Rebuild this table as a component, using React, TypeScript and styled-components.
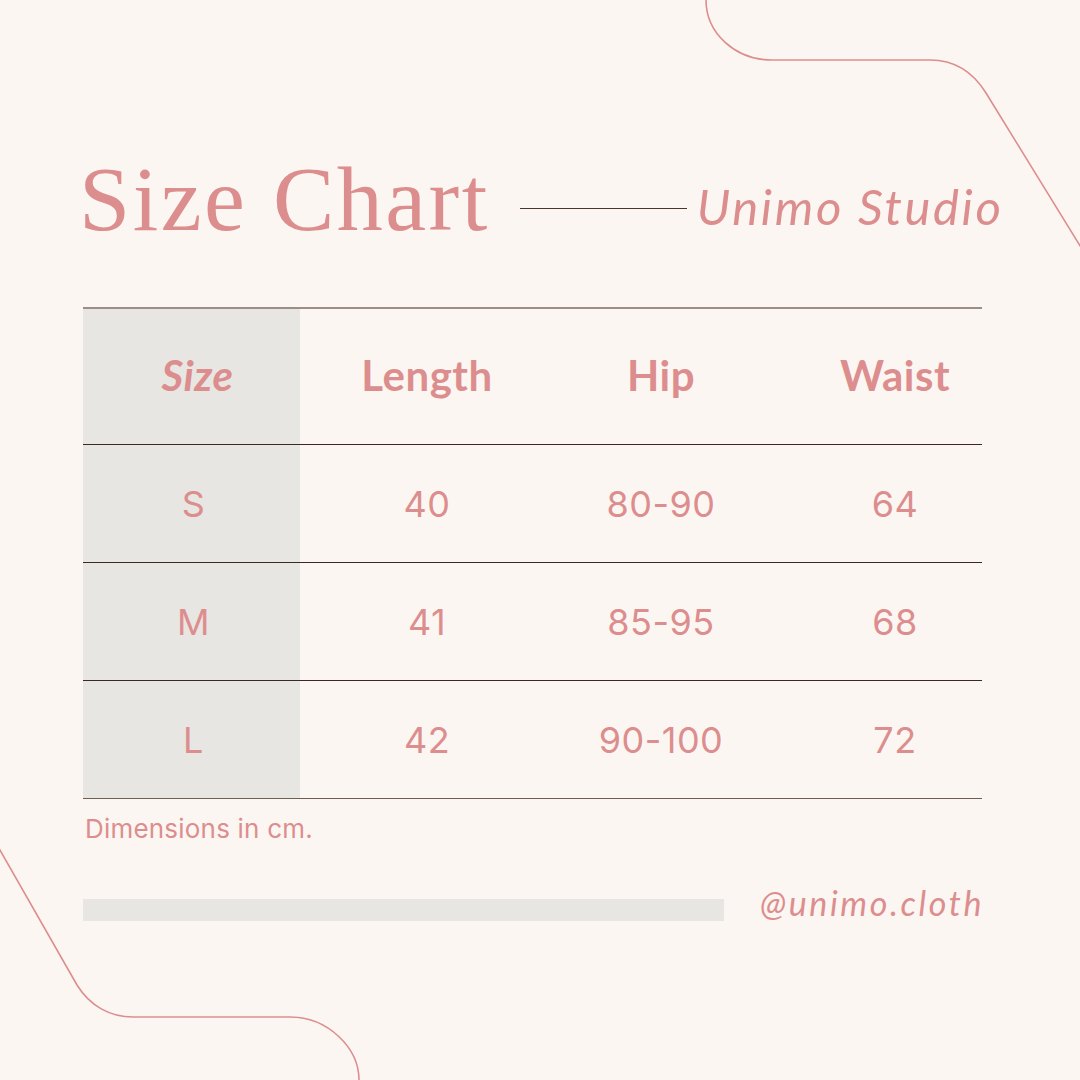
import styled, { createGlobalStyle } from 'styled-components';

const pink = '#dc8e8e';

const GlobalStyle = createGlobalStyle`
  body {
    margin: 0;
    background: #fcf6f2;
  }
`;

const Page = styled.div`
  position: relative;
  width: 1080px;
  height: 1080px;
  overflow: hidden;
  background: #fcf6f2;
  box-sizing: border-box;
  padding: 155px 0 0 83px;
  display: flex;
  flex-direction: column;
`;

const Decor = styled.svg`
  position: absolute;
  left: 0;
  top: 0;
  pointer-events: none;
`;

const Header = styled.header`
  display: flex;
  align-items: flex-start;
  height: 92px;
`;

const Title = styled.h1`
  margin: -2px 0 0 -4px;
  font-family: 'Liberation Serif', 'Times New Roman', serif;
  font-weight: 400;
  font-size: 92px;
  line-height: 1;
  letter-spacing: 2.5px;
  color: ${pink};
`;

const Rule = styled.div`
  width: 167px;
  height: 1px;
  background: #4a352b;
  margin: 53px 10px 0 30px;
`;

const Studio = styled.div`
  margin-top: 27px;
  font-family: Lato, 'Liberation Sans', sans-serif;
  font-style: italic;
  font-size: 49px;
  line-height: 1;
  letter-spacing: 2.6px;
  color: ${pink};
`;

const Table = styled.div`
  margin-top: 60px;
  width: 899px;
  border-top: 2px solid #9c8e86;
`;

const Row = styled.div<{ $head?: boolean; $last?: boolean }>`
  display: grid;
  grid-template-columns: 217px 254px 214px 214px;
  height: ${(p) => (p.$head ? 136 : 118)}px;
  box-sizing: border-box;
  border-bottom: 1px solid ${(p) => (p.$last ? '#6e5d52' : '#3b2820')};
`;

const Cell = styled.div<{ $head?: boolean; $first?: boolean }>`
  display: flex;
  align-items: center;
  justify-content: center;
  background: ${(p) => (p.$first ? '#e8e6e2' : 'transparent')};
  font-family: ${(p) => (p.$head ? "Lato, 'Liberation Sans', sans-serif" : "Inter, 'Liberation Sans', sans-serif")};
  font-weight: ${(p) => (p.$head ? 700 : 400)};
  font-style: ${(p) => (p.$head && p.$first ? 'italic' : 'normal')};
  font-size: ${(p) => (p.$head ? 42 : 36)}px;
  letter-spacing: 0.5px;
  padding-left: ${(p) => (p.$first ? (p.$head ? 12 : 4) : 0)}px;
  padding-bottom: ${(p) => (p.$head ? 4 : 0)}px;
  color: ${pink};

  &:nth-child(4) {
    padding-left: 40px;
  }
`;

const Note = styled.p`
  margin: 17px 0 0 2px;
  font-family: Inter, 'Liberation Sans', sans-serif;
  font-size: 26px;
  line-height: 1;
  letter-spacing: 0.2px;
  color: ${pink};
`;

const Footer = styled.footer`
  margin-top: 44px;
  width: 899px;
  display: flex;
  justify-content: space-between;
  align-items: flex-start;
`;

const Bar = styled.div`
  margin-top: 13px;
  width: 641px;
  height: 22px;
  background: #e8e6e2;
`;

const Handle = styled.div`
  font-family: Lato, 'Liberation Sans', sans-serif;
  font-style: italic;
  font-size: 34px;
  line-height: 1;
  letter-spacing: 2.6px;
  margin-right: -2px;
  color: ${pink};
`;

const headings = ['Size', 'Length', 'Hip', 'Waist'];

const sizes = [
  ['S', '40', '80-90', '64'],
  ['M', '41', '85-95', '68'],
  ['L', '42', '90-100', '72'],
];

export default function App() {
  return (
    <>
      <GlobalStyle />
      <Page>
        <Decor width="1080" height="1080" viewBox="0 0 1080 1080" fill="none">
          <path
            d="M706 -4 L706 0 C706 33 735 60 772 60 L930 60 C955 60 973 72 986 93 L1090 262"
            stroke={pink}
            strokeWidth="1.6"
          />
          <path
            d="M-8 836 L77 985 C90 1006 110 1017 133 1017 L290 1017 C328 1017 359 1048 359 1080 L359 1090"
            stroke={pink}
            strokeWidth="1.6"
          />
        </Decor>
        <Header>
          <Title>Size Chart</Title>
          <Rule />
          <Studio>Unimo Studio</Studio>
        </Header>
        <Table>
          <Row $head>
            {headings.map((h, i) => (
              <Cell key={h} $head $first={i === 0}>
                {h}
              </Cell>
            ))}
          </Row>
          {sizes.map((row, r) => (
            <Row key={row[0]} $last={r === sizes.length - 1}>
              {row.map((v, i) => (
                <Cell key={i} $first={i === 0}>
                  {v}
                </Cell>
              ))}
            </Row>
          ))}
        </Table>
        <Note>Dimensions in cm.</Note>
        <Footer>
          <Bar />
          <Handle>@unimo.cloth</Handle>
        </Footer>
      </Page>
    </>
  );
}
